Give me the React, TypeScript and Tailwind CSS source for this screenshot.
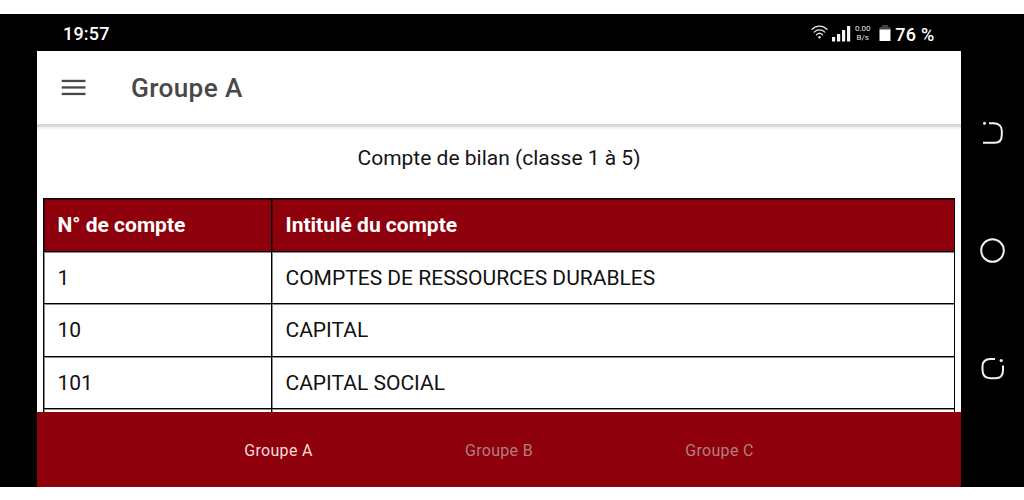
import { useState } from "react"

const accounts = [
  { code: "1", label: "COMPTES DE RESSOURCES DURABLES" },
  { code: "10", label: "CAPITAL" },
  { code: "101", label: "CAPITAL SOCIAL" },
  { code: "", label: "" },
]

const tabs = ["Groupe A", "Groupe B", "Groupe C"]

const cell = "border border-black px-[13.5px] pb-0 shadow-[inset_1px_1px_0_rgba(0,0,0,0.45)]"

function StatusBar() {
  return (
    <div className="flex h-[37px] shrink-0 items-center justify-between bg-black pl-[26px] pr-[26.5px] text-[18px] font-medium text-white">
      <span className="pt-[1px] tracking-[0.2px]">19:57</span>
      <div className="flex items-center">
        {/* Wifi */}
        <svg width="17" height="15" viewBox="0 0 17 15" fill="none" stroke="#e4e4e4" strokeWidth="1.3" strokeLinecap="round">
          <path d="M1 4.3C5.2 0 11.8 0 16 4.3" />
          <path d="M3.2 7.1C6.2 4.2 10.8 4.2 13.8 7.1" />
          <path d="M5.5 9.7C7.2 8.1 9.8 8.1 11.5 9.7" />
          <circle cx="8.5" cy="12.3" r="1.2" fill="#e4e4e4" stroke="none" />
        </svg>
        {/* Signal */}
        <svg className="ml-[4px] mt-[2px]" width="19" height="16" viewBox="0 0 19 16" fill="#f5f5f5">
          <rect x="0" y="11" width="3.2" height="4.5" />
          <rect x="5" y="8" width="3.2" height="7.5" />
          <rect x="10" y="4" width="3.2" height="11.5" />
          <rect x="15" y="0" width="3.2" height="15.5" />
        </svg>
        <div className="ml-[4px] flex w-[16px] flex-col items-center text-[8px] font-normal leading-[9px] text-[#e4e4e4]">
          <span className="whitespace-nowrap">0.00</span>
          <span>B/s</span>
        </div>
        {/* Battery */}
        <svg className="ml-[8px] mt-[1px]" width="12" height="16" viewBox="0 0 12 16">
          <path d="M3 0h6v2h2.5v4H.5V2H3z" fill="#444" />
          <path d="M.5 4.5h11V16H.5z" fill="#fff" />
        </svg>
        <span className="ml-[4.5px] pt-[3px] tracking-[0.25px]">76 %</span>
      </div>
    </div>
  )
}

function SystemButtons() {
  return (
    <div className="flex w-[63px] shrink-0 flex-col items-center">
      <svg className="mt-[104px]" width="30" height="30" viewBox="0 0 30 30" fill="none" stroke="#f2f2f2" strokeWidth="2">
        <path d="M11 5.2H15.5C20.5 5.2 23.8 8 23.8 12.8V17C23.8 22 21 24.7 17 24.7H5" />
        <circle cx="6.5" cy="5.2" r="1.5" fill="#f2f2f2" stroke="none" />
      </svg>
      <svg className="mt-[88px]" width="30" height="30" viewBox="0 0 30 30" fill="none" stroke="#f2f2f2" strokeWidth="2">
        <circle cx="14.5" cy="14.5" r="11.3" />
      </svg>
      <svg className="mt-[88px]" width="30" height="30" viewBox="0 0 30 30" fill="none" stroke="#f2f2f2" strokeWidth="2">
        <path d="M17 5H12.5C7 5 4.5 8 4.5 12.5V16C4.5 21.5 7.5 24.2 12.5 24.2H17.5C22 24.2 25 21.5 25 16.5V11.5" />
        <circle cx="23.2" cy="6.5" r="1.6" fill="#f2f2f2" stroke="none" />
      </svg>
    </div>
  )
}

export default function App() {
  const [active, setActive] = useState("Groupe A")

  return (
    <div className="h-[500px] w-[1024px] bg-white pt-[14px] font-['Roboto',sans-serif]">
      <div className="flex h-[473px] bg-black pl-[37px]">
        <div className="flex w-[924px] shrink-0 flex-col bg-white">
          <StatusBar />

          {/* Header */}
          <header className="flex h-[73px] shrink-0 items-center pl-[24px]">
            <button aria-label="Menu">
              <svg width="25" height="17" viewBox="0 0 25 17" fill="#484848">
                <rect x="0.7" y="0.8" width="23.8" height="2.3" />
                <rect x="0.7" y="7.3" width="23.8" height="2.3" />
                <rect x="0.7" y="13.8" width="23.8" height="2.3" />
              </svg>
            </button>
            <h1 className="ml-[45px] pt-[2px] text-[26.2px] font-medium leading-none tracking-[0.35px] text-[#484848]">
              Groupe A
            </h1>
          </header>
          <div className="h-[3px] shrink-0 bg-[#d9d9d9]" />
          <div className="h-[4px] shrink-0 bg-linear-to-b from-[#f0f0f0] to-white" />

          {/* Accounts */}
          <main className="min-h-0 flex-1 overflow-hidden">
            <p className="mt-[11px] h-[56px] text-center text-[21px] leading-[32px] text-[#151515]">
              Compte de bilan (classe 1 à 5)
            </p>
            <table className="ml-[6px] w-[912px] table-fixed border-collapse text-left text-[21px] leading-[28px] text-[#111]">
              <thead>
                <tr className="h-[52.5px] bg-[#8e000c] text-white">
                  <th className={`w-[228px] pt-0 font-bold ${cell}`}>N° de compte</th>
                  <th className={`pt-0 font-bold ${cell}`}>Intitulé du compte</th>
                </tr>
              </thead>
              <tbody>
                {accounts.map((account) => (
                  <tr key={account.code} className="h-[52.5px]">
                    <td className={`pt-[1px] ${cell}`}>{account.code}</td>
                    <td className={`pt-[1px] ${cell}`}>{account.label}</td>
                  </tr>
                ))}
              </tbody>
            </table>
          </main>

          {/* Bottom tabs */}
          <nav className="flex h-[75px] shrink-0 justify-center bg-[#8e000c]">
            {tabs.map((tab) => (
              <button
                key={tab}
                onClick={() => setActive(tab)}
                className={
                  active === tab
                    ? "w-[220.5px] pt-[2px] text-[16px] tracking-[0.3px] text-[#f5dcda]"
                    : "w-[220.5px] pt-[2px] text-[16px] tracking-[0.3px] text-[#b07f7c]"
                }
              >
                {tab}
              </button>
            ))}
          </nav>
        </div>
        <SystemButtons />
      </div>
    </div>
  )
}
